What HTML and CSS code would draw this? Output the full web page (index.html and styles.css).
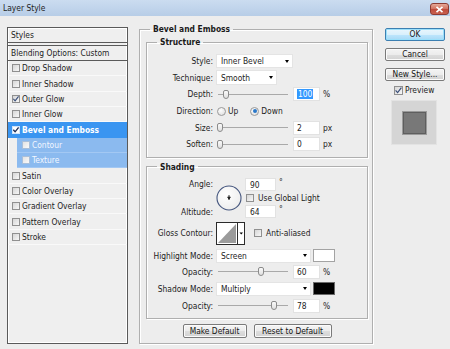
FILE: index.html
```html
<!DOCTYPE html>
<html>
<head>
<meta charset="utf-8">
<title>Layer Style</title>
<link rel="stylesheet" href="styles.css">
</head>
<body>
<div class="window">
  <div class="titlebar">
    <span class="title">Layer Style</span>
    <span class="close"><svg width="9" height="7" viewBox="0 0 9 7"><path d="M1.5 0.8 L7.5 6.2 M7.5 0.8 L1.5 6.2" stroke="#fff" stroke-width="1.6"/></svg></span>
  </div>
  <div class="content">
    <div class="styles-panel">
      <div class="sp-head">Styles</div>
      <div class="sp-blend">Blending Options: Custom</div>
      <ul class="sp-list">
        <li><span class="cb"></span>Drop Shadow</li>
        <li><span class="cb"></span>Inner Shadow</li>
        <li><span class="cb"><svg width="8" height="8" viewBox="0 0 8 8"><path d="M1.3 3.8 L3.1 5.8 L6.6 1.4" stroke="#3a4f7a" fill="none" stroke-width="1.2"/></svg></span>Outer Glow</li>
        <li><span class="cb"></span>Inner Glow</li>
        <li class="active"><span class="cb cb-white"><svg width="8" height="8" viewBox="0 0 8 8"><path d="M1.3 3.8 L3.1 5.8 L6.6 1.4" stroke="#1d2c55" fill="none" stroke-width="1.3"/></svg></span>Bevel and Emboss</li>
        <li class="sub"><span class="cb cb-light"></span>Contour</li>
        <li class="sub"><span class="cb cb-light"></span>Texture</li>
        <li><span class="cb"></span>Satin</li>
        <li><span class="cb"></span>Color Overlay</li>
        <li><span class="cb"></span>Gradient Overlay</li>
        <li><span class="cb"></span>Pattern Overlay</li>
        <li><span class="cb"></span>Stroke</li>
      </ul>
    </div>

    <fieldset class="group main-group">
      <legend>Bevel and Emboss</legend>
      <div class="main-body">
        <fieldset class="group sub-group">
          <legend>Structure</legend>
          <div class="form structure-form">
            <span class="lbl">Style:</span>
            <div class="ctl"><div class="sel sel-style"><span>Inner Bevel</span><span class="arrow"></span></div></div>

            <span class="lbl">Technique:</span>
            <div class="ctl"><div class="sel sel-tech"><span>Smooth</span><span class="arrow"></span></div></div>

            <span class="lbl">Depth:</span>
            <div class="ctl">
              <div class="slider"><span class="thumb" style="margin-left:7px"></span></div>
              <div class="inp"><span class="selected">100</span></div>
              <span class="unit">%</span>
            </div>

            <span class="lbl">Direction:</span>
            <div class="ctl">
              <span class="radio"></span><span class="radio-text">Up</span>
              <span class="radio radio-on"></span><span class="radio-text">Down</span>
            </div>

            <span class="lbl">Size:</span>
            <div class="ctl">
              <div class="slider"><span class="thumb" style="margin-left:1px"></span></div>
              <div class="inp">2</div>
              <span class="unit">px</span>
            </div>

            <span class="lbl">Soften:</span>
            <div class="ctl">
              <div class="slider"><span class="thumb" style="margin-left:1px"></span></div>
              <div class="inp">0</div>
              <span class="unit">px</span>
            </div>
          </div>
        </fieldset>

        <fieldset class="group sub-group shading">
          <legend>Shading</legend>
          <div class="shading-body">
            <div class="angle-block">
              <span class="lbl lbl-angle">Angle:</span>
              <span class="lbl lbl-alt">Altitude:</span>
              <div class="dial">
                <svg width="26" height="26" viewBox="0 0 26 26">
                  <defs><radialGradient id="dg" cx="0.4" cy="0.35" r="0.7"><stop offset="0" stop-color="#ffffff"/><stop offset="1" stop-color="#ececec"/></radialGradient></defs>
                  <circle cx="13" cy="13" r="12" fill="url(#dg)" stroke="#46577f" stroke-width="1.1"/>
                  <path d="M13 10.2 L13 14.8 M11.3 12.3 L14.7 12.3" stroke="#111" stroke-width="1"/>
                  <circle cx="13" cy="13.4" r="0.9" fill="#111"/>
                </svg>
              </div>
              <div class="ang-row r1"><div class="inp inp-ang">90</div><span class="deg">°</span></div>
              <div class="ang-row r2"><span class="cb"></span><span class="cb-text">Use Global Light</span></div>
              <div class="ang-row r3"><div class="inp inp-ang">64</div><span class="deg">°</span></div>
            </div>

            <div class="row row-gloss">
              <span class="lbl">Gloss Contour:</span>
              <div class="ctl">
                <svg class="contour" width="29" height="23" viewBox="0 0 29 23">
                  <rect x="0.5" y="0.5" width="28" height="22" fill="#fff" stroke="#2b2b2b"/>
                  <polygon points="2,21 20,2 20,21" fill="#9b9b9b"/>
                  <line x1="21.5" y1="1" x2="21.5" y2="22" stroke="#2b2b2b"/>
                  <polygon points="23.5,10.5 27,10.5 25.25,12.5" fill="#000"/>
                </svg>
                <span class="cb cb-aa"></span><span class="cb-text">Anti-aliased</span>
              </div>
            </div>

            <div class="row row-mode">
              <span class="lbl">Highlight Mode:</span>
              <div class="ctl"><div class="sel sel-mode"><span>Screen</span><span class="arrow"></span></div><span class="swatch swatch-white"></span></div>
            </div>

            <div class="row row-op1">
              <span class="lbl">Opacity:</span>
              <div class="ctl">
                <div class="slider"><span class="thumb" style="margin-left:42px"></span></div>
                <div class="inp">60</div>
                <span class="unit">%</span>
              </div>
            </div>

            <div class="row row-mode2">
              <span class="lbl">Shadow Mode:</span>
              <div class="ctl"><div class="sel sel-mode"><span>Multiply</span><span class="arrow"></span></div><span class="swatch swatch-black"></span></div>
            </div>

            <div class="row row-op2">
              <span class="lbl">Opacity:</span>
              <div class="ctl">
                <div class="slider"><span class="thumb" style="margin-left:55px"></span></div>
                <div class="inp">78</div>
                <span class="unit">%</span>
              </div>
            </div>
          </div>
        </fieldset>

        <div class="btn-row">
          <button class="btn btn-make">Make Default</button>
          <button class="btn btn-reset">Reset to Default</button>
        </div>
      </div>
    </fieldset>

    <div class="side">
      <button class="btn side-btn btn-ok">OK</button>
      <button class="btn side-btn">Cancel</button>
      <button class="btn side-btn">New Style...</button>
      <div class="preview"><span class="cb cb-prev"><svg width="9" height="9" viewBox="0 0 9 9"><path d="M1.6 4.4 L3.6 6.6 L7.4 1.6" stroke="#3a4f7a" fill="none" stroke-width="1.2"/></svg></span><span>Preview</span></div>
      <div class="swatch-preview"><span class="swatch-inner"></span></div>
    </div>
  </div>
</div>
</body>
</html>
```

FILE: styles.css
```css
* { box-sizing: border-box; }
html, body { margin: 0; padding: 0; }
body {
  width: 450px;
  height: 349px;
  overflow: hidden;
  background: #ededed;
  font-family: "DejaVu Sans Condensed", "DejaVu Sans", sans-serif;
  font-size: 8.4px;
  color: #1c1c1c;
}
.window { width: 450px; height: 349px; display: flex; flex-direction: column; }

.titlebar {
  height: 16px;
  flex: none;
  display: flex;
  justify-content: space-between;
  align-items: center;
  padding-left: 3px;
  background: linear-gradient(#cbdcf0, #b7cde7);
}
.title { color: #1e1e1e; }
.close {
  align-self: flex-start;
  margin-top: 3px;
  margin-right: 1px;
  width: 19px;
  height: 12px;
  border: 1px solid #8c3b33;
  border-radius: 3px;
  background: linear-gradient(#e6a897, #d0705f 50%, #bf4a3b 51%, #c9604e);
  display: flex;
  align-items: center;
  justify-content: center;
}

.content { flex: 1; display: flex; align-items: flex-start; }

/* styles list */
.styles-panel {
  margin: 11px 0 0 7px;
  width: 121px;
  height: 317px;
  border: 1px solid #5a5a5a;
  background: #efefef;
  box-shadow: inset 1px 1px 0 #fff, inset -1px -1px 0 #fff;
}
.sp-head {
  height: 15px;
  line-height: 14px;
  padding-left: 3px;
  border-bottom: 1px solid #5a5a5a;
}
.sp-blend {
  margin-top: 2px;
  height: 16px;
  line-height: 14px;
  padding-left: 3px;
  border-top: 1px solid #5a5a5a;
  border-bottom: 1px solid #5a5a5a;
}
.sp-list { list-style: none; margin: 0; padding: 0; }
.sp-list li {
  height: 15.35px;
  display: flex;
  align-items: center;
  gap: 2px;
  padding-left: 4px;
  border-bottom: 1px solid #f9f9f9;
}
.sp-list li.active { background: #3a95f1; color: #fff; font-weight: bold; border-bottom-color: #3a95f1; }
.sp-list li.sub { margin-left: 9px; background: #8bbaef; color: #f2f7ff; border-bottom-color: #a3c8f3; padding-left: 5px; }

.cb {
  flex: none;
  width: 8px;
  height: 8px;
  border: 1px solid #909090;
  background: linear-gradient(135deg, #d6d6d6, #f7f7f7);
  display: inline-flex;
  align-items: center;
  justify-content: center;
  overflow: hidden;
}
.cb svg { flex: none; }
.cb-white { background: #fff; border-color: #d0e4fa; }
.cb-light { background: linear-gradient(135deg, #e2e2e2, #fafafa); border-color: #a9bfd9; }

/* group boxes */
.group {
  margin: 0;
  padding: 0;
  min-inline-size: 0;
  border: 1px solid #afafaf;
  box-shadow: inset 1px 1px 0 #fff, 1px 1px 0 #fff;
}
.group > legend {
  margin-left: 10px;
  padding: 0 3px;
  line-height: 12px;
  font-weight: bold;
  color: #1a1a1a;
}
.group.main-group { margin: 7px 0 0 11px; width: 234px; }
.main-body { padding: 1px 4px 5px 6px; }
.group.sub-group { width: 222px; }
.group.shading { margin-top: 3px; }

.lbl { text-align: right; white-space: nowrap; }

.form {
  display: grid;
  grid-template-columns: 66px 1fr;
  column-gap: 3px;
  grid-auto-rows: 16.6px;
  align-items: center;
  padding: 5px 0 4px;
}
.ctl { display: flex; align-items: center; height: 100%; }

.sel {
  height: 14px;
  background: #fff;
  border: 1px solid #e4e4e4;
  display: flex;
  align-items: center;
  justify-content: space-between;
  padding: 0 3px 0 4px;
}
.sel-style { width: 77px; }
.sel-tech { width: 61px; height: 15px; }
.sel-mode { width: 95px; }
.arrow {
  width: 0;
  height: 0;
  border-left: 2.5px solid transparent;
  border-right: 2.5px solid transparent;
  border-top: 3px solid #000;
}

.slider {
  width: 72px;
  height: 12px;
  display: flex;
  align-items: center;
  background: linear-gradient(#a9a9a9, #a9a9a9) no-repeat 2px 50% / 70px 1px;
}
.thumb {
  width: 6px;
  height: 9px;
  border: 1px solid #8b8b8b;
  border-radius: 2px 2px 3px 3px;
  background: linear-gradient(#fafafa, #e0e0e0);
}
.inp {
  width: 27px;
  height: 14px;
  margin-left: 5px;
  background: #fff;
  border: 1px solid #e2e2e2;
  padding-left: 3px;
  line-height: 12px;
}
.selected { background: #3399ff; color: #fff; padding: 0 1px; }
.unit { margin-left: 3px; }

.radio {
  width: 9px;
  height: 9px;
  border-radius: 50%;
  border: 1px solid #9a9a9a;
  background: radial-gradient(circle at 40% 35%, #fdfdfd, #dadada);
  margin-left: 1px;
  display: inline-flex;
  align-items: center;
  justify-content: center;
}
.radio-on::after {
  content: "";
  width: 4px;
  height: 4px;
  border-radius: 50%;
  background: #2a78c9;
}
.radio-text { margin-left: 2px; margin-right: 11px; }

/* shading */
.shading-body { padding: 5px 0 5px; display: flex; flex-direction: column; }
.angle-block {
  display: grid;
  grid-template-columns: 66px 26px auto;
  grid-template-rows: 13px 14px 14px;
  column-gap: 3px;
  align-items: center;
}
.lbl-angle { grid-column: 1; grid-row: 1; }
.lbl-alt { grid-column: 1; grid-row: 3; }
.dial { grid-column: 2; grid-row: 1 / 4; display: flex; align-items: center; height: 26px; margin-top: -1px; }
.ang-row { grid-column: 3; display: flex; align-items: center; height: 100%; }
.r1 { grid-row: 1; }
.r2 { grid-row: 2; }
.r3 { grid-row: 3; }
.inp.inp-ang { width: 31px; height: 13px; margin-left: 0; padding-left: 4px; }
.deg { align-self: flex-start; margin-left: 3px; line-height: 9px; }
.cb-text { margin-left: 4px; }
.r2 .cb { margin-left: 1px; }

.row {
  display: grid;
  grid-template-columns: 66px auto;
  column-gap: 3px;
  align-items: center;
  height: 14px;
}
.row.row-gloss { height: 23px; margin-top: 3px; }
.row.row-mode { margin-top: 4px; }
.row.row-op1 { margin-top: 2px; }
.row.row-mode2 { margin-top: 3px; }
.row.row-op2 { margin-top: 3px; }
.contour { flex: none; display: block; }
.cb.cb-aa { margin-left: 9px; }
.swatch { width: 22px; height: 13px; margin-left: 2px; border: 1px solid #a3a3a3; }
.swatch-white { background: #fff; }
.swatch-black { background: #000; border-color: #6a6a6a; }

/* buttons */
.btn {
  font-family: inherit;
  font-size: 8.4px;
  color: #151515;
  height: 14px;
  padding: 0;
  line-height: 12px;
  border: 1px solid #7a7a7a;
  border-radius: 2px;
  background: linear-gradient(#f4f4f4, #ececec 50%, #dedede 51%, #d2d2d2);
  box-shadow: inset 0 0 0 1px #fbfbfb;
}
.btn-row { display: flex; justify-content: center; gap: 7px; margin-top: 5px; }
.btn-make { width: 64px; }
.btn-reset { width: 78px; }

.side { margin: 12px 0 0 12px; width: 60px; display: flex; flex-direction: column; }
.btn.side-btn { width: 60px; height: 13px; line-height: 11px; }
.side-btn + .side-btn { margin-top: 7px; }
.btn.btn-ok {
  border-color: #3c7fb1;
  box-shadow: inset 0 0 0 1px #9be0fb;
  background: linear-gradient(#eaf6fd, #d9f0fc 50%, #bee6fd 51%, #a7d9f5);
}
.preview { margin-top: 3px; height: 12px; display: flex; align-items: center; padding-left: 9px; gap: 2px; }
.cb.cb-prev { width: 9px; height: 9px; }
.swatch-preview {
  margin: 4px 0 0 6px;
  width: 46px;
  height: 45px;
  background: #d5d5d5;
  border: 1px solid #e3e3e3;
  display: flex;
  align-items: center;
  justify-content: center;
}
.swatch-inner {
  width: 23px;
  height: 22px;
  background: #787878;
  border: 1px solid #5e5e5e;
  box-shadow: 0 0 0 1px #9a9a9a;
}
```
